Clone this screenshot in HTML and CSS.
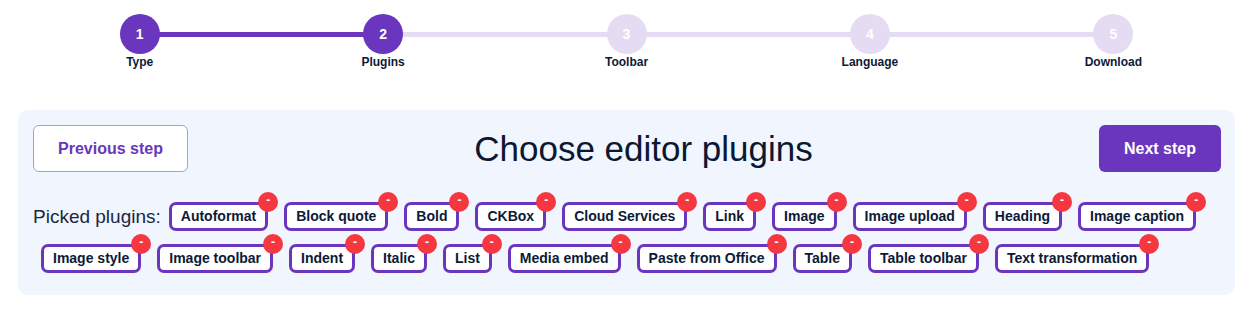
FILE: index.html
```html
<!DOCTYPE html>
<html lang="en">
<head>
    <meta charset="UTF-8">
    <meta name="viewport" content="width=device-width, initial-scale=1.0">
    <title>Choose editor plugins</title>
    <link rel="stylesheet" href="styles.css">
</head>
<body>

    <ol class="steps">
        <li class="step done"><span class="dot">1</span><span class="name">Type</span></li>
        <li class="step current"><span class="dot">2</span><span class="name">Plugins</span></li>
        <li class="step"><span class="dot">3</span><span class="name">Toolbar</span></li>
        <li class="step"><span class="dot">4</span><span class="name">Language</span></li>
        <li class="step"><span class="dot">5</span><span class="name">Download</span></li>
    </ol>

    <div class="panel">
        <div class="panel-head">
            <button class="btn btn-prev">Previous step</button>
            <h1>Choose editor plugins</h1>
            <button class="btn btn-next">Next step</button>
        </div>

        <div class="picked">
            <span class="picked-label">Picked plugins:</span>
            <span class="tag">Autoformat<b class="remove">-</b></span>
            <span class="tag">Block quote<b class="remove">-</b></span>
            <span class="tag">Bold<b class="remove">-</b></span>
            <span class="tag">CKBox<b class="remove">-</b></span>
            <span class="tag">Cloud Services<b class="remove">-</b></span>
            <span class="tag">Link<b class="remove">-</b></span>
            <span class="tag">Image<b class="remove">-</b></span>
            <span class="tag">Image upload<b class="remove">-</b></span>
            <span class="tag">Heading<b class="remove">-</b></span>
            <span class="tag">Image caption<b class="remove">-</b></span>
            <span class="tag">Image style<b class="remove">-</b></span>
            <span class="tag">Image toolbar<b class="remove">-</b></span>
            <span class="tag">Indent<b class="remove">-</b></span>
            <span class="tag">Italic<b class="remove">-</b></span>
            <span class="tag">List<b class="remove">-</b></span>
            <span class="tag">Media embed<b class="remove">-</b></span>
            <span class="tag">Paste from Office<b class="remove">-</b></span>
            <span class="tag">Table<b class="remove">-</b></span>
            <span class="tag">Table toolbar<b class="remove">-</b></span>
            <span class="tag">Text transformation<b class="remove">-</b></span>
        </div>
    </div>

</body>
</html>
```

FILE: styles.css
```css
body {
    margin: 0;
    padding: 0 16px 0 18px;
    font-family: "Liberation Sans", Arial, Helvetica, sans-serif;
    color: #0c1a36;
    background: #ffffff;
}

/* stepper */
.steps {
    display: flex;
    list-style: none;
    margin: 0;
    padding: 14px 0 0 0;
}

.step {
    flex: 1;
    position: relative;
    display: flex;
    flex-direction: column;
    align-items: center;
}

.step::after {
    content: "";
    position: absolute;
    left: 50%;
    width: 100%;
    top: 18px;
    height: 5px;
    background: #e5dcf3;
}

.step:last-child::after {
    display: none;
}

.step.done::after {
    background: #6936bd;
}

.dot {
    position: relative;
    z-index: 1;
    width: 40px;
    height: 40px;
    border-radius: 50%;
    background: #e5dcf3;
    color: #ffffff;
    font-size: 14px;
    font-weight: bold;
    line-height: 40px;
    text-align: center;
}

.done .dot,
.current .dot {
    background: #6936bd;
}

.name {
    margin-top: 1px;
    font-size: 12px;
    font-weight: bold;
    line-height: 14px;
    color: #0c1a36;
}

/* panel */
.panel {
    margin-top: 41px;
    background: #f1f5fe;
    border-radius: 10px;
    padding: 15px 14px 22px 15px;
}

.panel-head {
    display: flex;
    justify-content: space-between;
    align-items: center;
}

h1 {
    margin: 0;
    font-size: 35px;
    font-weight: normal;
    color: #0b1833;
}

.btn {
    height: 47px;
    border-radius: 6px;
    font-family: inherit;
    font-size: 16px;
    font-weight: bold;
    cursor: pointer;
}

.btn-prev {
    width: 155px;
    background: #ffffff;
    border: 1px solid #9ba9c0;
    color: #6936bd;
}

.btn-next {
    width: 122px;
    background: #6936bd;
    border: none;
    color: #ffffff;
}

/* picked plugins */
.picked {
    display: flex;
    flex-wrap: wrap;
    align-items: center;
    row-gap: 13px;
    margin-top: 30px;
}

.picked-label {
    font-size: 19px;
    color: #1a2840;
}

.tag {
    position: relative;
    margin: 0 8px;
    padding: 3px 9px;
    border: 3px solid #6936bd;
    border-radius: 7px;
    background: #ffffff;
    font-size: 14px;
    font-weight: bold;
    line-height: 17px;
    color: #0c1a36;
}

.remove {
    position: absolute;
    top: -13px;
    right: -13px;
    width: 20px;
    height: 20px;
    border-radius: 50%;
    background: #f5383f;
    color: #ffffff;
    font-size: 12px;
    line-height: 17px;
    text-align: center;
}
```
